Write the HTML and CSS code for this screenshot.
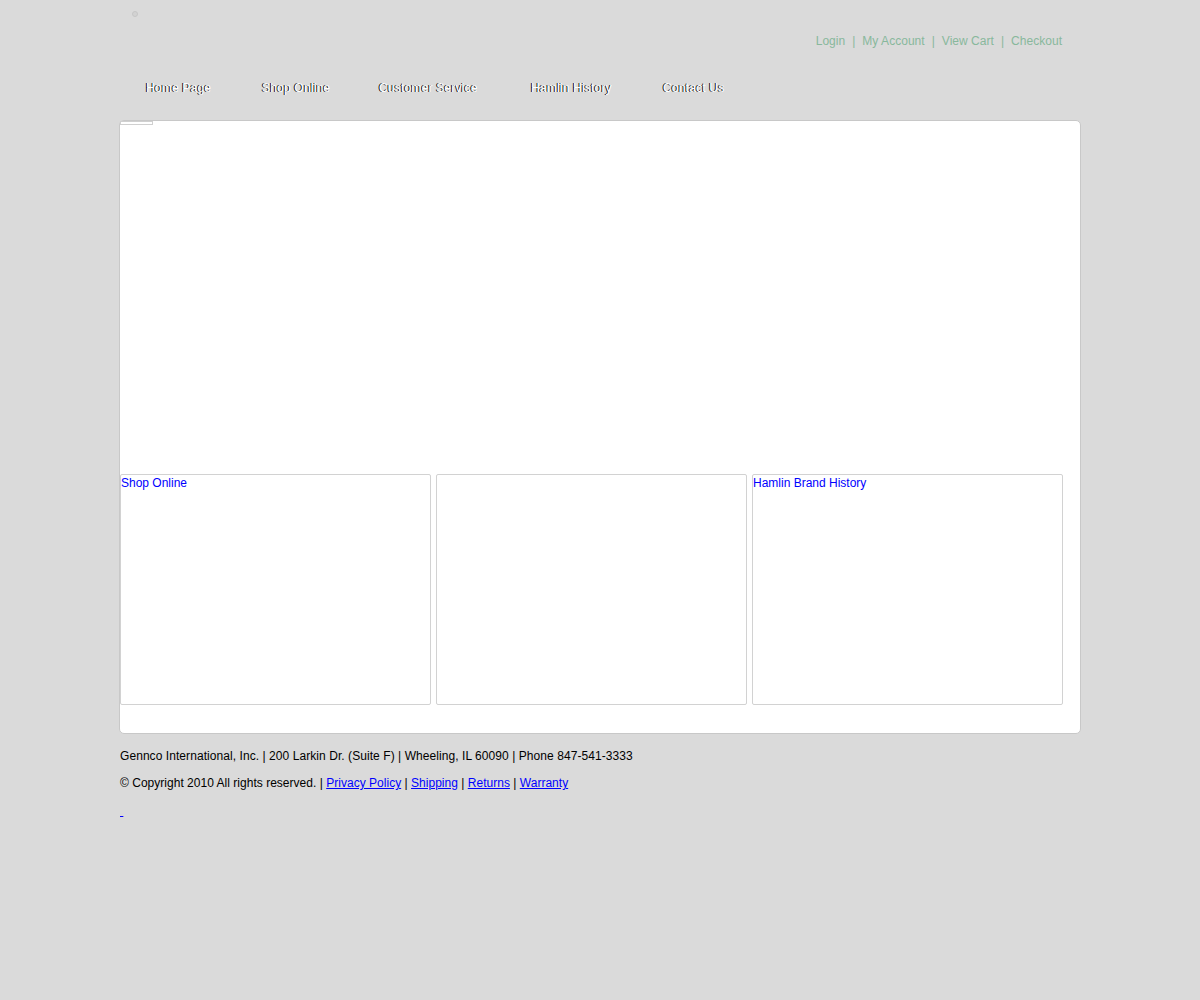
FILE: index.html
```html
<!DOCTYPE html>
<html>
<head>
<meta charset="utf-8">
<title>Gennco International</title>
<link rel="stylesheet" href="styles.css">
</head>
<body>
<div class="wrap">
  <div class="header">
    <div class="logo-row"><span class="dot"></span></div>
    <div class="toplinks">
      <a href="#">Login</a><span class="sep">|</span><a href="#">My Account</a><span class="sep">|</span><a href="#">View Cart</a><span class="sep">|</span><a href="#">Checkout</a>
    </div>
    <ul class="nav">
      <li class="n1"><a href="#">Home Page</a></li>
      <li class="n2"><a href="#">Shop Online</a></li>
      <li class="n3"><a href="#">Customer Service</a></li>
      <li class="n4"><a href="#">Hamlin History</a></li>
      <li class="n5"><a href="#">Contact Us</a></li>
    </ul>
  </div>
  <div class="main">
    <div class="hero"><span class="tab"></span></div>
    <div class="boxes">
      <div class="box"><a href="#">Shop Online</a></div>
      <div class="box"></div>
      <div class="box"><a href="#">Hamlin Brand History</a></div>
    </div>
  </div>
  <div class="footer">
    <p class="addr">Gennco International, Inc. | 200 Larkin Dr. (Suite F) | Wheeling, IL 60090 | Phone 847-541-3333</p>
    <p class="copy">© Copyright 2010 All rights reserved. | <a href="#">Privacy Policy</a> | <a href="#">Shipping</a> | <a href="#">Returns</a> | <a href="#">Warranty</a></p>
    <p class="dash"><a href="#">&nbsp;</a></p>
  </div>
</div>
</body>
</html>
```
FILE: styles.css
```css
html, body {
  margin: 0;
  padding: 0;
  background: #dadada;
  font-family: "Liberation Sans", Arial, sans-serif;
  font-size: 12px;
  color: #000;
}
.wrap {
  width: 960px;
  margin: 0 auto;
}
.header {
  height: 120px;
}
.logo-row {
  height: 20px;
  padding-left: 12px;
}
.dot {
  display: inline-block;
  width: 4px;
  height: 4px;
  margin-top: 11px;
  border: 1px solid #c6c6c6;
  border-radius: 50%;
  background: #d2d2d2;
}
.toplinks {
  margin-top: 14px;
  line-height: 14px;
  text-align: right;
  padding-right: 18px;
  color: #88b89c;
  letter-spacing: 0.03px;
}
.toplinks a {
  color: #88b89c;
  text-decoration: none;
}
.toplinks .sep {
  margin: 0 7px;
}
.nav {
  list-style: none;
  margin: 33px 0 0;
  padding: 0 0 0 26px;
  display: flex;
  line-height: 14px;
}
.nav li {
  flex: none;
}
.nav .n1 { width: 116px; }
.nav .n2 { width: 117px; }
.nav .n3 { width: 152px; }
.nav .n4 { width: 132px; }
.nav a {
  color: #fff;
  text-decoration: none;
  letter-spacing: 0.2px;
  text-shadow: -1px 0 0 #000;
}
.main {
  margin: 0 -1px;
  border: 1px solid #c8c8c8;
  border-radius: 5px;
  background: #fff;
  padding-bottom: 28px;
}
.hero {
  height: 353px;
}
.tab {
  display: block;
  width: 31px;
  height: 2px;
  border: 1px solid #d0d0d0;
}
.boxes {
  display: flex;
  gap: 5px;
}
.box {
  width: 309px;
  height: 229px;
  border: 1px solid #d2d2d2;
  border-radius: 2px;
  line-height: 16px;
}
.box a {
  color: #0000ff;
  text-decoration: none;
}
.footer p {
  margin: 0;
  line-height: 14px;
}
.footer a {
  color: #0000ff;
}
.addr {
  padding-top: 15px;
  letter-spacing: 0.065px;
}
.copy {
  padding-top: 13px;
  letter-spacing: 0.02px;
}
.dash {
  padding-top: 14px;
}
```
